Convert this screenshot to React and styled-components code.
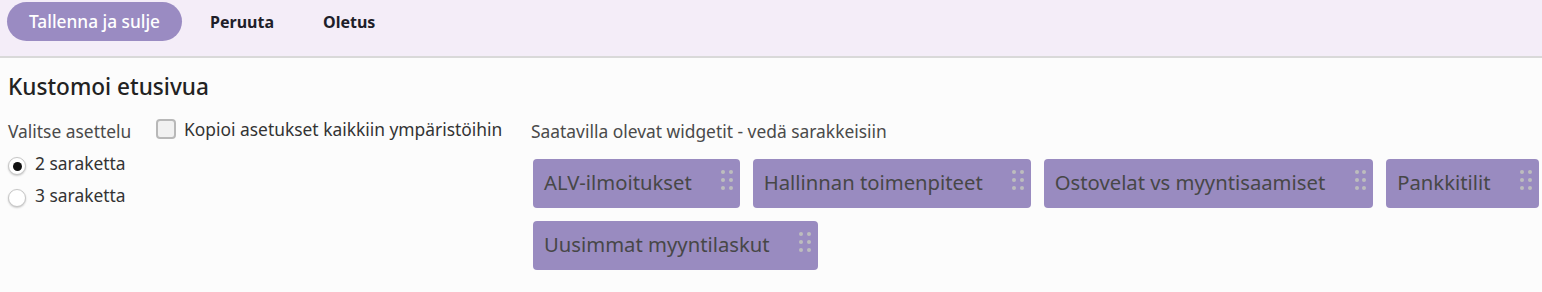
import React from "react";
import styled, { createGlobalStyle } from "styled-components";

const FONT = `"Noto Sans", "Open Sans", sans-serif`;

const GlobalStyle = createGlobalStyle`
  html, body { margin: 0; padding: 0; background: #fcfcfc; }
  body { font-family: ${FONT}; color: #333; }
  * { box-sizing: border-box; }
`;

const Page = styled.div`
  width: 1542px;
  height: 292px;
  overflow: hidden;
`;

const Toolbar = styled.div`
  display: flex;
  align-items: flex-start;
  gap: 7px;
  height: 58px;
  padding: 2px 7px 0;
  background: #f4edf8;
  border-bottom: 2px solid #d9d9d9;
`;

const ToolButton = styled.button`
  height: 39px;
  padding: ${(p) => (p.$primary ? "0 22px" : "0 21px")};
  border: none;
  border-radius: 20px;
  font-family: ${FONT};
  font-size: ${(p) => (p.$primary ? "17.3px" : "16px")};
  font-weight: ${(p) => (p.$primary ? 500 : 700)};
  color: ${(p) => (p.$primary ? "#fff" : "#1e1e2a")};
  background: ${(p) => (p.$primary ? "#9a8bc2" : "transparent")};
  cursor: pointer;
`;

const Content = styled.div`
  padding: 14px 0 0 8px;
`;

const Heading = styled.h2`
  margin: 0 0 18px;
  font-size: 22.6px;
  line-height: 30px;
  font-weight: 500;
  color: #222;
`;

const Columns = styled.div`
  display: grid;
  grid-template-columns: 148px 375px 1fr;
  align-items: start;
`;

const LayoutGroup = styled.div`
  display: flex;
  flex-direction: column;
`;

const GroupLabel = styled.div`
  font-size: 17.4px;
  line-height: 22px;
  color: #4a4a4a;
  margin-bottom: 5px;
`;

const RadioRow = styled.label`
  display: flex;
  align-items: flex-start;
  gap: 9px;
  height: 32px;
  padding-top: 5px;
  font-size: 17.4px;
  line-height: 22px;
  color: #333;
`;

const RadioCircle = styled.span`
  width: 18px;
  height: 18px;
  margin-top: 5px;
  border-radius: 50%;
  background: #fff;
  border: 1px solid #c6c6c6;
  box-shadow: 0 1px 2px rgba(0, 0, 0, 0.2);
  display: flex;
  align-items: center;
  justify-content: center;
  flex: none;
  &::after {
    content: "";
    width: 9px;
    height: 9px;
    border-radius: 50%;
    background: ${(p) => (p.$checked ? "#111" : "transparent")};
  }
`;

const CheckRow = styled.label`
  display: flex;
  align-items: flex-start;
  gap: 8px;
  font-size: 17.4px;
  line-height: 22px;
  color: #333;
  margin-top: -2px;
  white-space: nowrap;
`;

const CheckBox = styled.span`
  width: 20px;
  height: 20px;
  margin-top: 1px;
  border: 2px solid #b8b8b8;
  border-radius: 4px;
  background: #f1f1f1;
  flex: none;
`;

const WidgetPanel = styled.div`
  display: flex;
  flex-direction: column;
`;

const PanelTitle = styled.div`
  font-size: 17.4px;
  line-height: 22px;
  color: #4a4a4a;
  margin-bottom: 17px;
`;

const WidgetList = styled.div`
  display: flex;
  flex-wrap: wrap;
  gap: 13px;
  padding-left: 2px;
`;

const Widget = styled.div`
  position: relative;
  height: 49px;
  display: flex;
  align-items: center;
  padding: 0 48px 4px 11px;
  background: #998bc0;
  border-radius: 4px;
  font-size: 20.25px;
  color: #474747;
  white-space: nowrap;
`;

const Grip = styled.span`
  position: absolute;
  right: 7px;
  top: 11px;
  display: grid;
  grid-template-columns: 4px 4px;
  grid-auto-rows: 4px;
  column-gap: 3.5px;
  row-gap: 4px;
  & > i {
    display: block;
    border-radius: 50%;
    background: #bdbdbd;
  }
`;

const widgets = [
  "ALV-ilmoitukset",
  "Hallinnan toimenpiteet",
  "Ostovelat vs myyntisaamiset",
  "Pankkitilit",
  "Uusimmat myyntilaskut",
];

export default function App() {
  return (
    <Page>
      <GlobalStyle />
      <Toolbar>
        <ToolButton $primary>Tallenna ja sulje</ToolButton>
        <ToolButton>Peruuta</ToolButton>
        <ToolButton>Oletus</ToolButton>
      </Toolbar>
      <Content>
        <Heading>Kustomoi etusivua</Heading>
        <Columns>
          <LayoutGroup>
            <GroupLabel>Valitse asettelu</GroupLabel>
            <RadioRow>
              <RadioCircle $checked />2 saraketta
            </RadioRow>
            <RadioRow>
              <RadioCircle />3 saraketta
            </RadioRow>
          </LayoutGroup>
          <CheckRow>
            <CheckBox />
            Kopioi asetukset kaikkiin ympäristöihin
          </CheckRow>
          <WidgetPanel>
            <PanelTitle>Saatavilla olevat widgetit - vedä sarakkeisiin</PanelTitle>
            <WidgetList>
              {widgets.map((w) => (
                <Widget key={w}>
                  {w}
                  <Grip>
                    <i /><i /><i /><i /><i /><i />
                  </Grip>
                </Widget>
              ))}
            </WidgetList>
          </WidgetPanel>
        </Columns>
      </Content>
    </Page>
  );
}
